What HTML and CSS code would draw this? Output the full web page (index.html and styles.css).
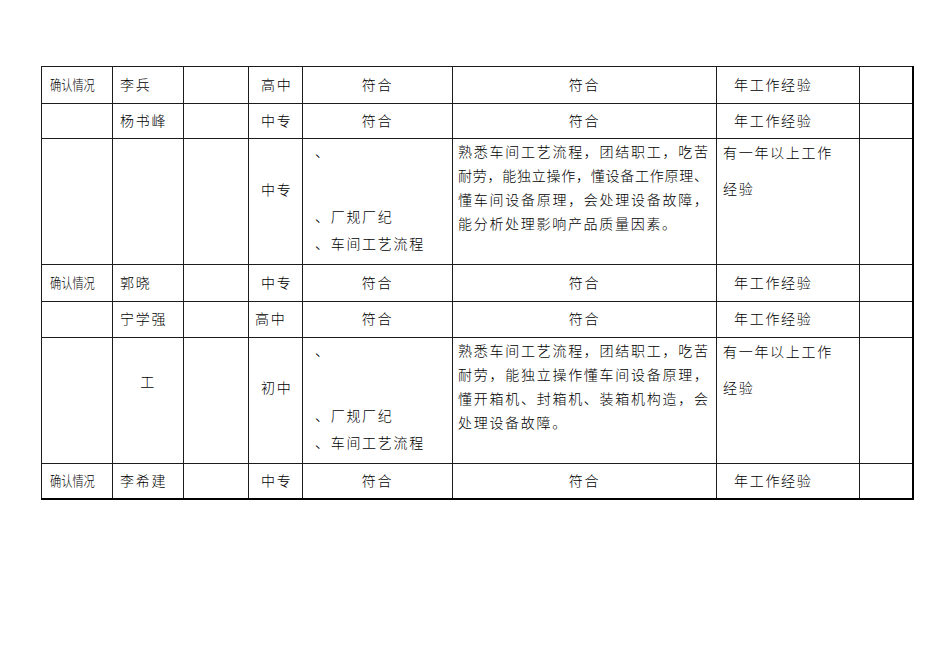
FILE: index.html
```html
<!DOCTYPE html>
<html lang="zh-CN">
<head>
<meta charset="utf-8">
<title>确认情况</title>
<link rel="stylesheet" href="styles.css">
</head>
<body>
<div class="sheet">
<table class="grid">
<colgroup>
<col class="c1"><col class="c2"><col class="c3"><col class="c4"><col class="c5"><col class="c6"><col class="c7"><col class="c8">
</colgroup>
<tbody>
<tr class="r36">
<td class="confirm"><span class="narrow">确认情况</span></td><td class="name">李兵</td><td></td><td class="edu">高中</td><td class="ok">符合</td><td class="ok">符合</td><td class="exp">年工作经验</td><td class="last"></td>
</tr>
<tr class="r35">
<td></td><td class="name">杨书峰</td><td></td><td class="edu">中专</td><td class="ok">符合</td><td class="ok">符合</td><td class="exp">年工作经验</td><td class="last"></td>
</tr>
<tr class="tall">
<td></td><td></td><td></td>
<td class="edu top"><div class="edu-tall">中专</div></td>
<td class="top req">
<div class="req-first">、</div>
<div class="req-rest">
<div class="req-line">、厂规厂纪</div>
<div class="req-line">、车间工艺流程</div>
</div>
</td>
<td class="top desc">
<div class="dl j">熟悉车间工艺流程，团结职工，吃苦</div>
<div class="dl j">耐劳，能独立操作，懂设备工作原理、</div>
<div class="dl j">懂车间设备原理，会处理设备故障，</div>
<div class="dl">能分析处理影响产品质量因素。</div>
</td>
<td class="top more">
<div class="m1">有一年以上工作</div>
<div class="m2">经验</div>
</td>
<td class="last"></td>
</tr>
<tr class="r37">
<td class="confirm"><span class="narrow">确认情况</span></td><td class="name">郭晓</td><td></td><td class="edu">中专</td><td class="ok">符合</td><td class="ok">符合</td><td class="exp">年工作经验</td><td class="last"></td>
</tr>
<tr class="r36b">
<td></td><td class="name">宁学强</td><td></td><td class="edu shift">高中</td><td class="ok">符合</td><td class="ok">符合</td><td class="exp">年工作经验</td><td class="last"></td>
</tr>
<tr class="tall">
<td></td>
<td class="top"><div class="worker">工</div></td>
<td></td>
<td class="edu top"><div class="edu-tall2">初中</div></td>
<td class="top req">
<div class="req-first">、</div>
<div class="req-rest">
<div class="req-line">、厂规厂纪</div>
<div class="req-line">、车间工艺流程</div>
</div>
</td>
<td class="top desc">
<div class="dl j">熟悉车间工艺流程，团结职工，吃苦</div>
<div class="dl j">耐劳，能独立操作懂车间设备原理，</div>
<div class="dl j">懂开箱机、封箱机、装箱机构造，会</div>
<div class="dl">处理设备故障。</div>
</td>
<td class="top more">
<div class="m1">有一年以上工作</div>
<div class="m2">经验</div>
</td>
<td class="last"></td>
</tr>
<tr class="r35 endrow">
<td class="confirm"><span class="narrow">确认情况</span></td><td class="name">李希建</td><td></td><td class="edu">中专</td><td class="ok">符合</td><td class="ok">符合</td><td class="exp">年工作经验</td><td class="last"></td>
</tr>
</tbody>
</table>
</div>
</body>
</html>
```

FILE: styles.css
```css
html, body {
  margin: 0;
  padding: 0;
  background: #ffffff;
}

body {
  font-family: "Noto Sans CJK SC", "Noto Sans", sans-serif;
  font-size: 14px;
  font-weight: 300;
  color: #000000;
}

.sheet {
  padding: 66px 0 0 41px;
}

.grid {
  border-collapse: collapse;
  table-layout: fixed;
  width: 871px;
}

.c1 { width: 71px; }
.c2 { width: 71px; }
.c3 { width: 65px; }
.c4 { width: 54px; }
.c5 { width: 150px; }
.c6 { width: 264px; }
.c7 { width: 143px; }
.c8 { width: 53px; }

.grid td {
  border: 1px solid #1c1c1c;
  padding: 0;
  vertical-align: middle;
  letter-spacing: 1.7px;
  white-space: nowrap;
  line-height: 18px;
}

.grid td.last {
  border-right: 2px solid #000000;
}

.endrow td {
  border-bottom: 2px solid #000000;
}

.r35 td { height: 31px; padding-bottom: 3px; }
.r36 td { height: 33px; padding-bottom: 3px; }
.r36b td { height: 32px; padding-bottom: 3px; }
.r37 td { height: 33px; padding-bottom: 3px; }
.tall td { height: 125px; }

.endrow td { height: 31px; padding-bottom: 3px; }

.grid td.top {
  vertical-align: top;
}

.confirm {
  padding-left: 8px !important;
  letter-spacing: 0 !important;
}

.narrow {
  display: inline-block;
  transform: scaleX(0.8);
  transform-origin: left center;
}

.name {
  padding-left: 7px !important;
}

.edu {
  padding-left: 12px !important;
}

.edu.shift {
  padding-left: 6px !important;
}

.ok {
  text-align: center;
}

.exp {
  padding-left: 17px !important;
}

.edu-tall {
  padding-top: 41px;
}

.edu-tall2 {
  padding-top: 40px;
}

.worker {
  padding-top: 34px;
  text-align: center;
}

.req {
  padding-left: 12px !important;
}

.req-first {
  line-height: 24px;
}

.req-rest {
  margin-top: 40px;
}

.req-line {
  line-height: 27px;
}

.desc {
  padding: 0 8px 0 5px !important;
}

.dl {
  line-height: 24px;
}

.dl.j {
  letter-spacing: 0;
  text-align: justify;
  text-align-last: justify;
}

.more {
  padding-left: 6px !important;
}

.m1 {
  line-height: 24px;
  padding-top: 1px;
}

.m2 {
  line-height: 24px;
  margin-top: 12px;
}
```
